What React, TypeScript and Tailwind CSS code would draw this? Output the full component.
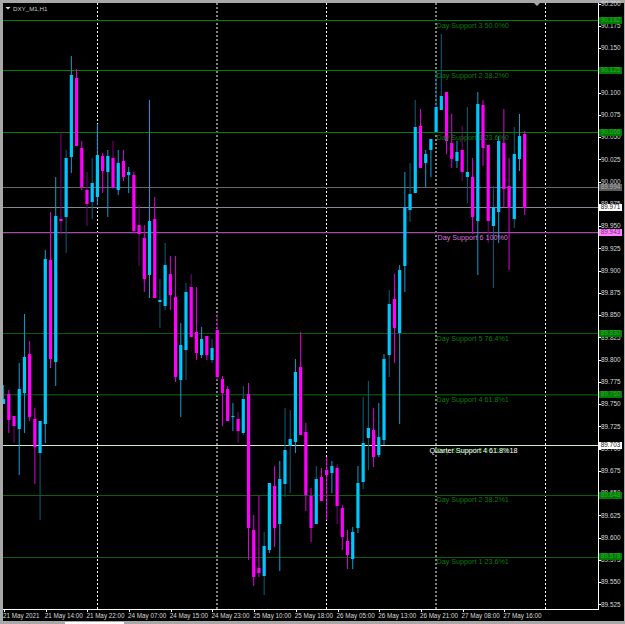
// DXY M1,H1 chart window (MT4 style): candles and levels are an svg, axes and labels are real text.

type Candle = [high: number, top: number, bottom: number, low: number, kind: "c" | "m", dim?: number];

// y values are in page pixels. dim: 1 = the wicks are drawn in the muted tone
const candles: Candle[] = [
  [385, 399, 404, 404, "c"],
  [390, 394, 420, 433, "m"],
  [416, 416, 426, 443, "m", 1],
  [363, 389, 429, 475, "c"],
  [314, 357, 393, 433, "c"],
  [341, 354, 417, 421, "m"],
  [408, 419, 447, 484, "m"],
  [421, 421, 453, 520, "c", 1],
  [250, 259, 424, 443, "c"],
  [212, 260, 359, 368, "m"],
  [177, 216, 362, 386, "c"],
  [132, 219, 221, 234, "m", 1],
  [150, 158, 217, 253, "c", 1],
  [56, 75, 157, 173, "c"],
  [69, 78, 146, 146, "m"],
  [141, 148, 187, 190, "m"],
  [172, 190, 204, 226, "m", 1],
  [158, 183, 202, 219, "c", 1],
  [124, 155, 197, 205, "c"],
  [153, 156, 171, 193, "m"],
  [150, 156, 172, 217, "c"],
  [141, 158, 188, 189, "m", 1],
  [150, 163, 190, 195, "c"],
  [150, 161, 177, 181, "m"],
  [167, 172, 175, 193, "c"],
  [172, 175, 231, 233, "m"],
  [205, 225, 234, 266, "m", 1],
  [225, 238, 279, 292, "m"],
  [100, 221, 275, 298, "c"],
  [197, 219, 298, 298, "m"],
  [279, 300, 302, 328, "c", 1],
  [243, 265, 306, 310, "c", 1],
  [256, 274, 295, 310, "m"],
  [256, 297, 377, 382, "m"],
  [323, 345, 380, 417, "c"],
  [283, 292, 350, 380, "c", 1],
  [274, 287, 337, 337, "m", 1],
  [287, 332, 353, 360, "m"],
  [327, 339, 355, 358, "c"],
  [336, 336, 355, 360, "m"],
  [339, 348, 360, 363, "c", 1],
  [314, 330, 377, 380, "m", 1],
  [376, 379, 393, 426, "m"],
  [386, 389, 421, 421, "m"],
  [403, 416, 417, 431, "c"],
  [412, 419, 431, 443, "m", 1],
  [386, 399, 433, 435, "c", 1],
  [383, 394, 528, 560, "m"],
  [515, 530, 577, 586, "m"],
  [496, 568, 573, 577, "m"],
  [532, 546, 576, 595, "c", 1],
  [483, 483, 550, 553, "c"],
  [466, 486, 528, 547, "m"],
  [461, 479, 524, 571, "c"],
  [408, 450, 484, 497, "c", 1],
  [410, 439, 446, 493, "c", 1],
  [359, 372, 442, 453, "c"],
  [332, 367, 435, 435, "m"],
  [423, 432, 495, 511, "m"],
  [488, 496, 528, 542, "m"],
  [466, 479, 524, 524, "c", 1],
  [468, 477, 501, 501, "m"],
  [457, 470, 475, 520, "m"],
  [461, 466, 473, 493, "c"],
  [464, 468, 506, 524, "m", 1],
  [505, 508, 537, 550, "m"],
  [530, 541, 555, 569, "m"],
  [527, 532, 559, 569, "c"],
  [466, 483, 528, 533, "c"],
  [397, 443, 482, 489, "c", 1],
  [381, 428, 438, 470, "c", 1],
  [408, 430, 457, 467, "m"],
  [403, 437, 455, 457, "c"],
  [354, 359, 440, 445, "c"],
  [290, 304, 355, 377, "c", 1],
  [274, 299, 328, 363, "m"],
  [265, 270, 333, 424, "c"],
  [172, 207, 266, 292, "c"],
  [163, 194, 210, 222, "c", 1],
  [100, 127, 193, 193, "c", 1],
  [109, 126, 168, 168, "m"],
  [150, 154, 163, 187, "c"],
  [139, 139, 150, 177, "c"],
  [70, 107, 132, 132, "c", 1],
  [34, 96, 110, 110, "c", 1],
  [92, 92, 141, 154, "m"],
  [114, 143, 159, 168, "m"],
  [141, 152, 161, 168, "c"],
  [126, 150, 172, 181, "m", 1],
  [107, 172, 177, 203, "c", 1],
  [158, 177, 217, 234, "m"],
  [92, 104, 221, 275, "c"],
  [100, 105, 148, 166, "m"],
  [145, 145, 221, 243, "m", 1],
  [186, 207, 226, 288, "c", 1],
  [136, 141, 212, 243, "c"],
  [109, 143, 189, 207, "m"],
  [158, 186, 208, 270, "m"],
  [127, 154, 219, 228, "c", 1],
  [114, 136, 159, 171, "c"],
  [131, 134, 208, 215, "m"],
];

const levels = [
  { y: 20.5, color: "#008000", w: 1 },
  { y: 70.5, color: "#008000", w: 1 },
  { y: 132.5, color: "#008000", w: 1 },
  { y: 187.5, color: "#666666", w: 1 },
  { y: 207.5, color: "#858a92", w: 1 },
  { y: 232.7, color: "#a050a0", w: 1.2 },
  { y: 333.5, color: "#045c04", w: 1 },
  { y: 394.8, color: "#064806", w: 1.4 },
  { y: 445.5, color: "#c8f0c0", w: 1 },
  { y: 495.5, color: "#0b5e0b", w: 1 },
  { y: 557.5, color: "#0b5e0b", w: 1 },
];

const priceTicks = [
  "90.200", "90.175", "90.150", "90.125", "90.100", "90.075", "90.050", "90.025", "90.000", "89.975",
  "89.950", "89.925", "89.900", "89.875", "89.850", "89.825", "89.800", "89.775", "89.750", "89.725",
  "89.700", "89.675", "89.650", "89.625", "89.600", "89.575", "89.550", "89.525",
];

const timeTicks = [
  "21 May 2021", "21 May 14:00", "21 May 22:00", "24 May 07:00", "24 May 15:00", "24 May 23:00", "25 May 10:00",
  "25 May 18:00", "26 May 05:00", "26 May 13:00", "26 May 21:00", "27 May 08:00", "27 May 16:00",
];

const GREEN_BADGE = "bg-[#007a00] text-[#38a838]";
const priceTags = [
  { text: "90.182", cls: `top-[17px] ${GREEN_BADGE}` },
  { text: "90.125", cls: `top-[67px] ${GREEN_BADGE}` },
  { text: "90.066", cls: `top-[129px] ${GREEN_BADGE}` },
  { text: "89.994", cls: "top-[184px] bg-[#5a5a5a] text-[#b0b0b0]" },
  { text: "89.971", cls: "top-[204px] bg-white text-[#222222]" },
  { text: "89.943", cls: "top-[229px] bg-[#ff80ff] text-[#7a2a7a]" },
  { text: "89.830", cls: `top-[330px] ${GREEN_BADGE}` },
  { text: "89.760", cls: `top-[391px] ${GREEN_BADGE}` },
  { text: "89.703", cls: "top-[442px] bg-white text-[#222222]" },
  { text: "89.648", cls: `top-[492px] ${GREEN_BADGE}` },
  { text: "89.578", cls: `top-[553px] ${GREEN_BADGE}` },
];

const chartNotes = [
  { text: "Day Support 3 50.0%0", cls: "left-[436.5px] top-[21.5px] text-[#0a7d0a]" },
  { text: "Day Support 2 38.2%0", cls: "left-[436.5px] top-[71.5px] text-[#0a7d0a]" },
  { text: "Day Support 3 23.6%0", cls: "left-[436.5px] top-[133.5px] text-[#0a7d0a]" },
  { text: "Day Support 6 100%0", cls: "left-[437.5px] top-[233.5px] text-[#d878d8]" },
  { text: "Day Support 5 76.4%1", cls: "left-[436.5px] top-[334.5px] text-[#0a7d0a]" },
  { text: "Day Support 4 61.8%1", cls: "left-[436.5px] top-[396px] text-[#0a7d0a]" },
  { text: "Day Support 3 50.0%1", cls: "left-[436.5px] top-[446.5px] text-[#0a7d0a]" },
  { text: "Quarter Support 4 61.8%18", cls: "left-[429.5px] top-[446.5px] text-white" },
  { text: "Day Support 2 38.2%1", cls: "left-[436.5px] top-[496px] text-[#0a7d0a]" },
  { text: "Day Support 1 23.6%1", cls: "left-[436.5px] top-[557.5px] text-[#0a7d0a]" },
];

function ChartDrawing() {
  return (
    <svg viewBox="3 3 595 606" className="block h-full w-full">
      {[97.5, 326.5, 436, 545.5].map((x) => (
        <line key={x} x1={x} x2={x} y1={3} y2={609} stroke="#ffffff" strokeDasharray="2 2" />
      ))}
      <line x1={217} x2={217} y1={3} y2={609} stroke="#a0a0a0" strokeWidth={1.6} strokeDasharray="2 2" />
      {levels.map((l) => (
        <line key={l.y} x1={3} x2={598} y1={l.y} y2={l.y} stroke={l.color} strokeWidth={l.w} />
      ))}
      {candles.map(([high, top, bottom, low, kind, dim], i) => {
        const x = 3.6 + i * 5.211;
        const wick =
          kind === "c" ? (dim ? "#075f7e" : "#0a9fd6") : dim ? "#7d0083" : "#dc00dc";
        const body = kind === "c" ? "#00c8ff" : "#ff00ff";
        return (
          <g key={i}>
            <rect x={x - 0.5} y={high} width={1} height={low - high} fill={wick} />
            <rect x={x - 1.6} y={top} width={3.2} height={bottom - top} fill={body} />
          </g>
        );
      })}
      <path d="M534 3h6l-3 3z" fill="#a8a8a8" />
      <path d="M5.5 7h5l-2.5 2.5z" fill="#e0e0e0" />
    </svg>
  );
}

export default function App() {
  return (
    <div className="relative flex h-[624px] w-[625px] flex-col overflow-hidden bg-[#a8a8a8] pt-[3px] pr-px pb-[3px] pl-[3px] font-['Liberation_Sans',Arial,sans-serif] leading-none">
      <div className="flex min-h-0 flex-1 flex-col bg-black">
        <div className="flex h-[606px] shrink-0">
          <div className="w-[595px] shrink-0">
            <ChartDrawing />
          </div>
          <div className="w-[26px] shrink-0 border-l border-white">
            <div className="-mt-[10px] flex flex-col">
              {priceTicks.map((p) => (
                <div key={p} className="flex h-[22.25px] shrink-0 items-center">
                  <span className="h-px w-[2px] shrink-0 bg-white" />
                  <span className="text-[6.4px] text-[#d8d8d8]">{p}</span>
                </div>
              ))}
            </div>
          </div>
        </div>
        <div className="flex h-[12px] w-[596px] shrink-0 border-t border-white">
          {timeTicks.map((t) => (
            <div key={t} className="flex w-[41.7px] shrink-0 flex-col">
              <span className="ml-px h-[2px] w-px bg-white" />
              <span className="mt-[1px] whitespace-nowrap text-[6.3px] text-[#d8d8d8]">{t}</span>
            </div>
          ))}
        </div>
      </div>

      {priceTags.map((t) => (
        <span
          key={t.text}
          className={`absolute left-[599px] flex h-[7px] w-[23px] items-center justify-center text-[6.4px] ${t.cls}`}
        >
          {t.text}
        </span>
      ))}
      {chartNotes.map((n) => (
        <span key={n.text} className={`absolute whitespace-nowrap text-[7.2px] ${n.cls}`}>
          {n.text}
        </span>
      ))}
      <span className="absolute left-[13px] top-[5.5px] text-[6.2px] text-[#c8c8c8]">DXY_M1,H1</span>
      <span className="absolute bottom-0 left-[65px] h-[2px] w-[59px] bg-white" />
    </div>
  );
}
